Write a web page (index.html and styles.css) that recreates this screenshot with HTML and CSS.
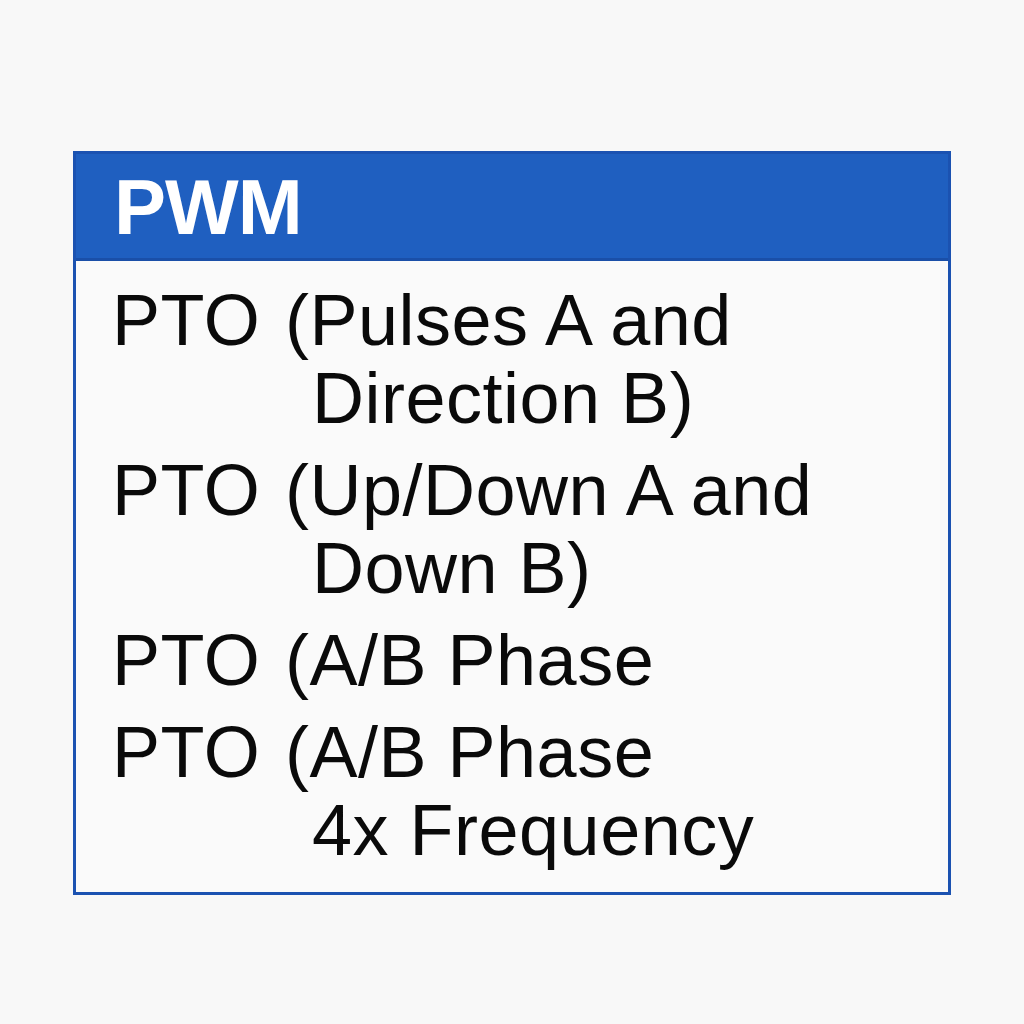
FILE: index.html
```html
<!DOCTYPE html>
<html lang="en">
<head>
<meta charset="utf-8">
<title>PWM</title>
<link rel="stylesheet" href="styles.css">
</head>
<body>
<div class="panel">
  <div class="panel-header">PWM</div>
  <div class="panel-body">
    <div class="item"><span class="label">PTO</span><span class="desc">(Pulses A and<br>Direction B)</span></div>
    <div class="item"><span class="label">PTO</span><span class="desc">(Up/Down A and<br>Down B)</span></div>
    <div class="item"><span class="label">PTO</span><span class="desc">(A/B Phase</span></div>
    <div class="item"><span class="label">PTO</span><span class="desc">(A/B Phase<br>4x Frequency</span></div>
  </div>
</div>
</body>
</html>
```
FILE: styles.css
```css
html, body {
  margin: 0;
  padding: 0;
  background: #f8f8f8;
}
body {
  font-family: "Liberation Sans", Arial, sans-serif;
  color: #0a0a0a;
}
.panel {
  width: 878px;
  box-sizing: border-box;
  margin: 151px auto 0;
  border: 3px solid #1b52b1;
  background: #fafafa;
}
.panel-header {
  height: 102px;
  padding: 2px 0 0 38px;
  line-height: 102px;
  background: #1f5fc0;
  border-bottom: 3px solid #1a4fa8;
  color: #ffffff;
  font-size: 78px;
  font-weight: 700;
  letter-spacing: -1px;
}
.panel-body {
  padding: 20px 0 23px 36px;
  display: flex;
  flex-direction: column;
  gap: 14px;
}
.item {
  display: grid;
  grid-template-columns: 173px 1fr;
  font-size: 72px;
  line-height: 78px;
  letter-spacing: 0.5px;
}
.desc {
  padding-left: 27px;
  text-indent: -27px;
}
```
